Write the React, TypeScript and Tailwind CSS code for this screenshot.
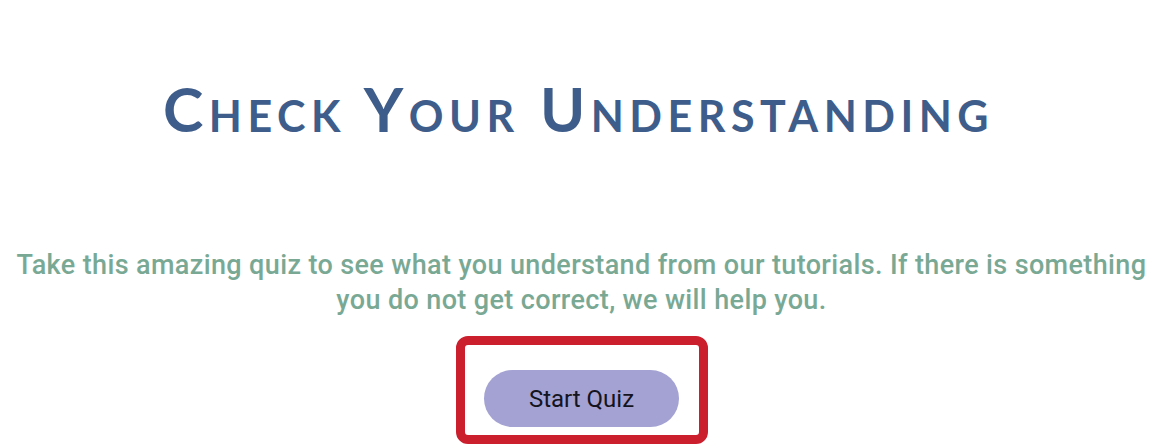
export default function App() {
  return (
    <div className="min-h-screen w-full bg-white flex flex-col items-center overflow-hidden">
      {/* Heading */}
      <h1 className="mt-[69px] pr-[6px] text-[61px] leading-[80px] font-bold text-[#3f5d8a] tracking-[5.5px] [font-variant:small-caps] font-['Lato',sans-serif]">
        Check Your Understanding
      </h1>

      {/* Intro */}
      <p className="mt-[99px] w-[1150px] text-center text-[27px] leading-[35px] font-medium tracking-[0.37px] text-[#79a994] font-['Roboto',sans-serif]">
        Take this amazing quiz to see what you understand from our tutorials. If there is something you do not get correct, we will help you.
      </p>

      {/* Highlighted button */}
      <div className="mt-[18px] w-[252px] h-[108px] rounded-[12px] border-[9px] border-[#cc1f2e] flex justify-center pt-[25px]">
        <button className="w-[195px] h-[57px] rounded-full bg-[#a3a2d3] text-[24px] text-[#141420] font-['Roboto',sans-serif]">
          Start Quiz
        </button>
      </div>
    </div>
  )
}
